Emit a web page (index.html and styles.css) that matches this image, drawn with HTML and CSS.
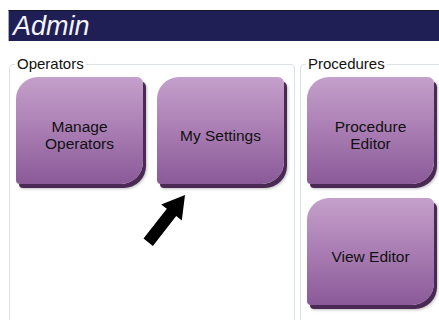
FILE: index.html
```html
<!DOCTYPE html>
<html lang="en">
<head>
  <meta charset="UTF-8">
  <meta name="viewport" content="width=device-width, initial-scale=1.0">
  <title>Admin</title>
  <link rel="stylesheet" href="styles.css">
</head>
<body>
  <div class="screen">
    <div class="title-bar">
      <h1>Admin</h1>
    </div>

    <div class="groups">
      <fieldset class="group operators">
        <legend>Operators</legend>
        <div class="tiles">
          <button type="button" class="tile">Manage<br>Operators</button>
          <button type="button" class="tile">My Settings</button>
        </div>
      </fieldset>

      <fieldset class="group procedures">
        <legend>Procedures</legend>
        <div class="tiles column">
          <button type="button" class="tile">Procedure<br>Editor</button>
          <button type="button" class="tile">View Editor</button>
        </div>
      </fieldset>
    </div>

    <!-- callout arrow pointing at My Settings -->
    <svg class="callout" viewBox="0 0 50 60" width="50" height="60">
      <polygon points="45,5 21.2,14.4 26.8,18.7 3.5,48.6 12.9,56 36.2,26.1 41.8,30.4" fill="#000"/>
    </svg>
  </div>
</body>
</html>
```

FILE: styles.css
```css
body {
  margin: 0;
  padding: 0;
  background: #fff;
  font-family: "Liberation Sans", Arial, sans-serif;
  overflow: hidden;
}
.screen {
  position: relative;
  width: 439px;
  height: 320px;
  overflow: hidden;
}
.title-bar {
  margin: 10px 0 0 8px;
  height: 30px;
  background: #1f1f56;
  border-top: 1px solid #151525;
  border-left: 1px solid #a8a8b4;
}
.title-bar h1 {
  margin: 0;
  padding-left: 4px;
  font-size: 27px;
  font-weight: normal;
  font-style: italic;
  line-height: 30px;
  color: #f4f4fa;
}
.groups {
  display: flex;
  gap: 5px;
  margin: 17px 0 0 9px;
}
.group {
  margin: 0;
  padding: 7px 6px 24px 6px;
  border: 1px solid #dce1e6;
  border-radius: 4px;
  min-inline-size: 0;
  flex-shrink: 0;
}
.group legend {
  padding: 0 2px;
  margin-left: -1px;
  font-size: 15px;
  line-height: 12px;
  color: #111;
}
.tiles {
  display: flex;
  gap: 14px;
}
.tiles.column {
  flex-direction: column;
}
.operators .tiles {
  padding-right: 4px;
}
.procedures {
  width: 150px;
}
.tile {
  width: 127px;
  height: 107px;
  padding: 9px 0 0 0;
  border: none;
  border-radius: 22px 6px 22px 4px;
  background: linear-gradient(to bottom, #c5a0cb 0%, #a97db3 50%, #8a5a98 100%);
  box-shadow: 3px 4px 0 #4a2954, 4px 5px 3px rgba(0, 0, 0, 0.25);
  font-family: "Liberation Sans", Arial, sans-serif;
  font-size: 15.5px;
  line-height: 17px;
  color: #111;
  text-align: center;
  cursor: pointer;
}
.callout {
  position: absolute;
  left: 140px;
  top: 190px;
}
```
